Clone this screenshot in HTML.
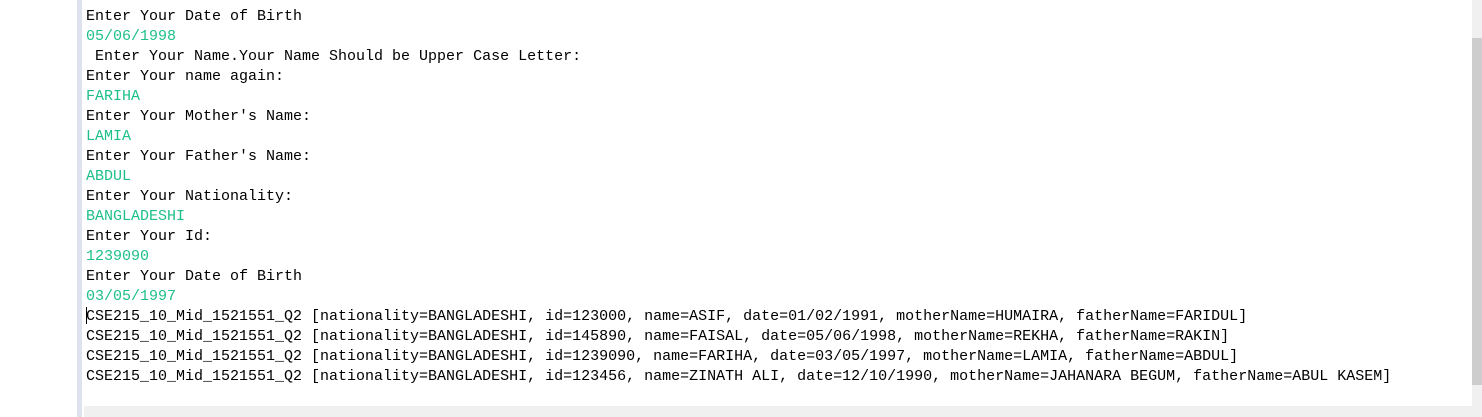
<!DOCTYPE html>
<html><head><style>
html,body{margin:0;padding:0;width:1482px;height:417px;background:#fff;overflow:hidden;position:relative}
.bar{position:absolute;left:77px;top:0;width:5px;height:417px;background:#dde2ee}
.vs{position:absolute;left:1472px;top:0;width:10px;height:406px;background:#f0f0f0}
.th{position:absolute;left:1472px;top:38px;width:10px;height:347px;background:#cdcdcd}
.hs{position:absolute;left:84px;top:406px;width:1398px;height:11px;background:#f0f0f0}
pre{position:absolute;left:86px;top:7px;margin:0;font-family:"Liberation Mono",monospace;font-size:15px;line-height:20px;color:#000}
.g{color:#1dbf8a}
.cur{position:absolute;left:86px;top:307px;width:1px;height:17px;background:#000}
</style></head><body>
<div class="bar"></div><div class="vs"></div><div class="th"></div><div class="hs"></div>
<pre>Enter Your Date of Birth
<span class="g">05/06/1998</span>
 Enter Your Name.Your Name Should be Upper Case Letter:
Enter Your name again:
<span class="g">FARIHA</span>
Enter Your Mother's Name:
<span class="g">LAMIA</span>
Enter Your Father's Name:
<span class="g">ABDUL</span>
Enter Your Nationality:
<span class="g">BANGLADESHI</span>
Enter Your Id:
<span class="g">1239090</span>
Enter Your Date of Birth
<span class="g">03/05/1997</span>
CSE215_10_Mid_1521551_Q2 [nationality=BANGLADESHI, id=123000, name=ASIF, date=01/02/1991, motherName=HUMAIRA, fatherName=FARIDUL]
CSE215_10_Mid_1521551_Q2 [nationality=BANGLADESHI, id=145890, name=FAISAL, date=05/06/1998, motherName=REKHA, fatherName=RAKIN]
CSE215_10_Mid_1521551_Q2 [nationality=BANGLADESHI, id=1239090, name=FARIHA, date=03/05/1997, motherName=LAMIA, fatherName=ABDUL]
CSE215_10_Mid_1521551_Q2 [nationality=BANGLADESHI, id=123456, name=ZINATH ALI, date=12/10/1990, motherName=JAHANARA BEGUM, fatherName=ABUL KASEM]</pre>
<div class="cur"></div>
</body></html>
